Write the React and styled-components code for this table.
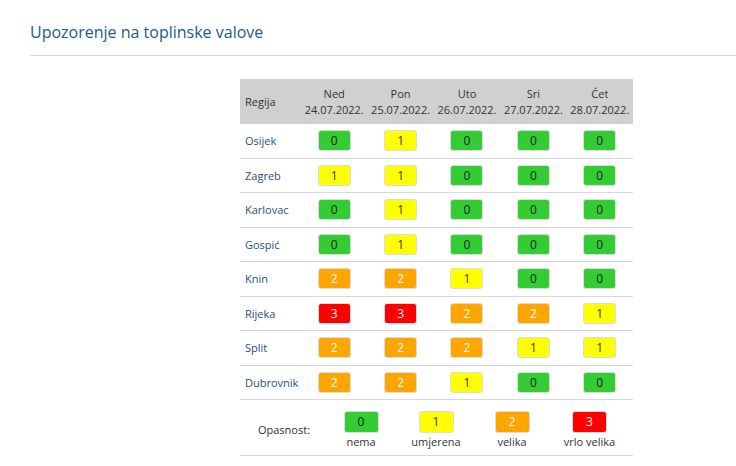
import styled, { createGlobalStyle } from "styled-components";

const GlobalStyle = createGlobalStyle`
    body {
        margin: 0;
        background: #ffffff;
        font-family: "Open Sans", "Noto Sans", sans-serif;
    }
`;

const LEVELS = [
    { bg: "#33cc33", fg: "#1a1a1a", label: "nema" },
    { bg: "#ffff00", fg: "#333333", label: "umjerena" },
    { bg: "#ffa500", fg: "#ffffff", label: "velika" },
    { bg: "#ff0000", fg: "#ffffff", label: "vrlo velika" },
];

const DAYS = [
    { day: "Ned", date: "24.07.2022." },
    { day: "Pon", date: "25.07.2022." },
    { day: "Uto", date: "26.07.2022." },
    { day: "Sri", date: "27.07.2022." },
    { day: "Čet", date: "28.07.2022." },
];

const REGIONS = [
    { name: "Osijek", values: [0, 1, 0, 0, 0] },
    { name: "Zagreb", values: [1, 1, 0, 0, 0] },
    { name: "Karlovac", values: [0, 1, 0, 0, 0] },
    { name: "Gospić", values: [0, 1, 0, 0, 0] },
    { name: "Knin", values: [2, 2, 1, 0, 0] },
    { name: "Rijeka", values: [3, 3, 2, 2, 1] },
    { name: "Split", values: [2, 2, 2, 1, 1] },
    { name: "Dubrovnik", values: [2, 2, 1, 0, 0] },
];

const App = () => {
    return (
        <Page>
            <GlobalStyle />
            <TitleBar>
                <Title>Upozorenje na toplinske valove</Title>
            </TitleBar>

            <Table>
                <HeaderRow>
                    <HeaderCell $left>Regija</HeaderCell>
                    {DAYS.map((d) => (
                        <HeaderCell key={d.day}>
                            <span>{d.day}</span>
                            <span>{d.date}</span>
                        </HeaderCell>
                    ))}
                </HeaderRow>

                {REGIONS.map((r) => (
                    <Row key={r.name}>
                        <RegionName>{r.name}</RegionName>
                        {r.values.map((v, i) => (
                            <Cell key={i}>
                                <Badge $level={v}>{v}</Badge>
                            </Cell>
                        ))}
                    </Row>
                ))}

                <LegendRow>
                    <LegendTitle>Opasnost:</LegendTitle>
                    {LEVELS.map((l, i) => (
                        <LegendItem key={l.label}>
                            <Badge $level={i} $big>{i}</Badge>
                            <LegendLabel>{l.label}</LegendLabel>
                        </LegendItem>
                    ))}
                </LegendRow>
            </Table>
        </Page>
    );
};

export default App;

const Page = styled.div`
    width: 736px;
    height: 466px;
    overflow: hidden;
`;

const TitleBar = styled.div`
    margin-left: 30px;
    height: 56px;
    border-bottom: 1px solid #d8d8d8;
    display: flex;
    align-items: center;
    padding-top: 8px;
    box-sizing: border-box;
`;

const Title = styled.h2`
    margin: 0;
    font-size: 16px;
    font-weight: 500;
    color: #1d5a87;
`;

const Table = styled.div`
    margin: 23px 0 0 240px;
    width: 393px;
    font-size: 11px;
    color: #333333;
`;

const HeaderRow = styled.div`
    display: grid;
    grid-template-columns: 61px repeat(5, 1fr);
    height: 45px;
    background: #d0d0d0;
`;

const HeaderCell = styled.div`
    display: flex;
    flex-direction: column;
    justify-content: center;
    align-items: ${(p) => (p.$left ? "flex-start" : "center")};
    padding-left: ${(p) => (p.$left ? "5px" : "0")};
    line-height: 16px;
    white-space: nowrap;
    color: #333333;
`;

const Row = styled.div`
    display: grid;
    grid-template-columns: 61px repeat(5, 1fr);
    height: 33.5px;
    border-bottom: 1px solid #d5d8dd;
`;

const RegionName = styled.div`
    display: flex;
    align-items: center;
    padding-left: 5px;
    color: #1f4f7c;
`;

const Cell = styled.div`
    display: flex;
    align-items: center;
    justify-content: center;
`;

const Badge = styled.div`
    width: ${(p) => (p.$big ? "35px" : "33px")};
    height: ${(p) => (p.$big ? "22px" : "21px")};
    box-sizing: border-box;
    border: 1px solid #dcdcdc;
    border-radius: 3px;
    background: ${(p) => LEVELS[p.$level].bg};
    color: ${(p) => LEVELS[p.$level].fg};
    display: flex;
    align-items: center;
    justify-content: center;
    font-size: 12px;
`;

const LegendRow = styled.div`
    display: grid;
    grid-template-columns: 88px 66px 84px 68px 1fr;
    height: 55px;
    border-bottom: 1px solid #d5d8dd;
    align-items: center;
`;

const LegendTitle = styled.div`
    text-align: center;
    color: #333333;
    padding-top: 4px;
`;

const LegendItem = styled.div`
    display: flex;
    flex-direction: column;
    align-items: center;
    gap: 2px;
    padding-top: 4px;
`;

const LegendLabel = styled.div`
    color: #333333;
    line-height: 14px;
`;
